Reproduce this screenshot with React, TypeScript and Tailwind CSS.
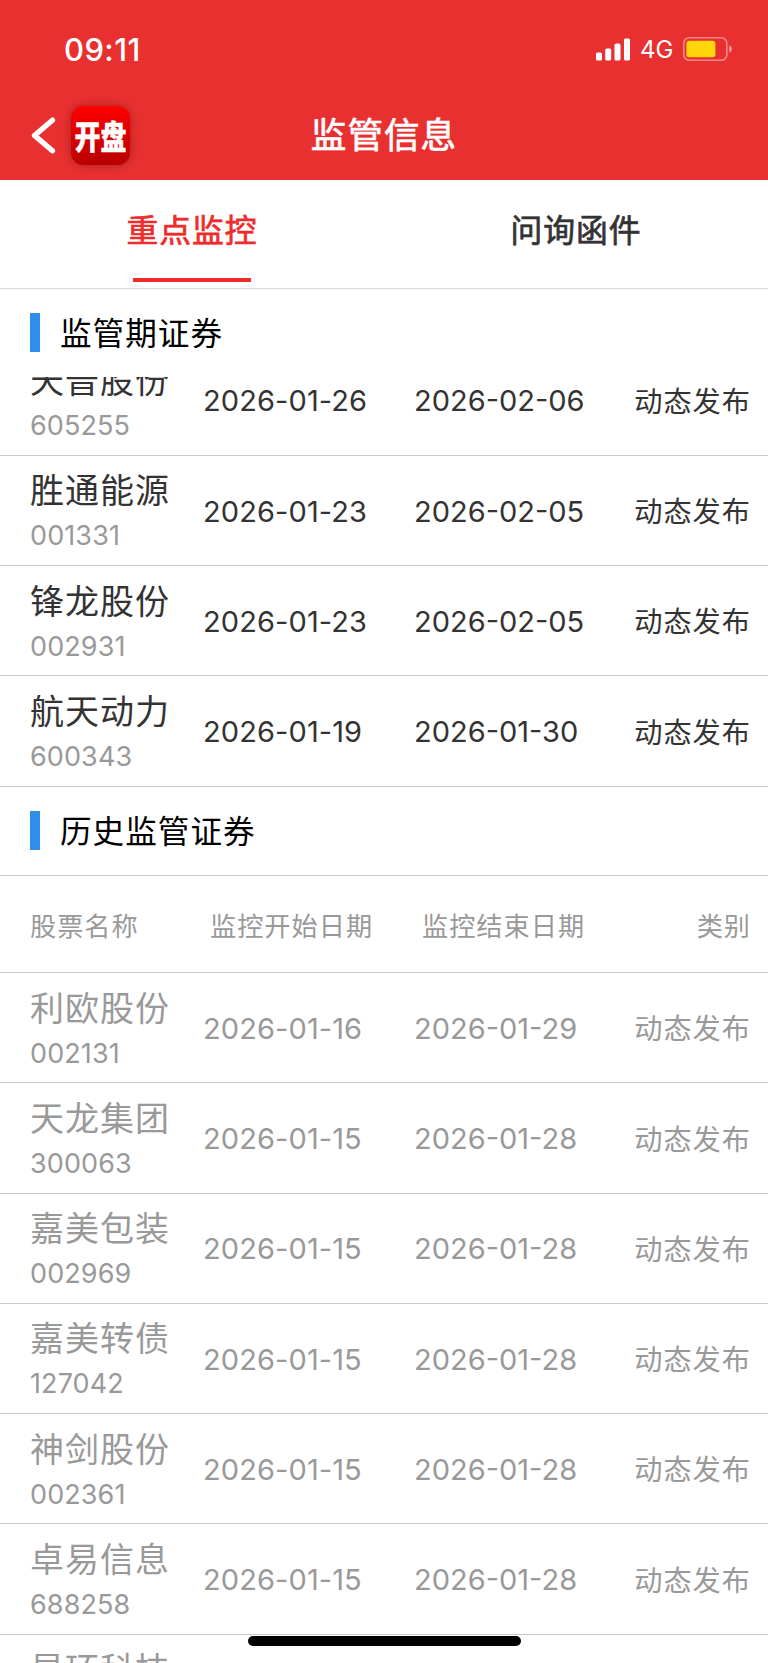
import { useState } from "react";

type Stock = {
  name: string;
  code: string;
  start: string;
  end: string;
  type: string;
};

const activeStocks: Stock[] = [
  { name: "天普股份", code: "605255", start: "2026-01-26", end: "2026-02-06", type: "动态发布" },
  { name: "胜通能源", code: "001331", start: "2026-01-23", end: "2026-02-05", type: "动态发布" },
  { name: "锋龙股份", code: "002931", start: "2026-01-23", end: "2026-02-05", type: "动态发布" },
  { name: "航天动力", code: "600343", start: "2026-01-19", end: "2026-01-30", type: "动态发布" },
];

const historyStocks: Stock[] = [
  { name: "利欧股份", code: "002131", start: "2026-01-16", end: "2026-01-29", type: "动态发布" },
  { name: "天龙集团", code: "300063", start: "2026-01-15", end: "2026-01-28", type: "动态发布" },
  { name: "嘉美包装", code: "002969", start: "2026-01-15", end: "2026-01-28", type: "动态发布" },
  { name: "嘉美转债", code: "127042", start: "2026-01-15", end: "2026-01-28", type: "动态发布" },
  { name: "神剑股份", code: "002361", start: "2026-01-15", end: "2026-01-28", type: "动态发布" },
  { name: "卓易信息", code: "688258", start: "2026-01-15", end: "2026-01-28", type: "动态发布" },
  { name: "星环科技", code: "", start: "", end: "", type: "" },
];

const tabs = ["重点监控", "问询函件"];

function StatusBar() {
  return (
    <div className="flex h-[98px] items-center justify-between pl-[64px] pr-[35px] text-white">
      <span className="text-[31px] font-medium leading-none tracking-[0.4px]">09:11</span>
      <div className="flex items-center">
        <svg width="34" height="23" viewBox="0 0 34 23" fill="currentColor">
          <rect x="0" y="14.5" width="6" height="8" rx="1.6" />
          <rect x="9.2" y="10.5" width="6" height="12" rx="1.6" />
          <rect x="18.5" y="5.5" width="6" height="17" rx="1.6" />
          <rect x="28" y="0.5" width="6" height="22" rx="1.6" />
        </svg>
        <span className="ml-[10px] w-[34px] pt-[2px] text-[24px] leading-none">4G</span>
        <svg className="ml-[9px]" width="50" height="24" viewBox="0 0 50 24">
          <rect x="0.8" y="0.8" width="43" height="22.4" rx="5.5" fill="none" stroke="#fff" strokeOpacity="0.42" strokeWidth="1.6" />
          <rect x="3.4" y="3.8" width="29" height="16.4" rx="3" fill="#ffd60a" />
          <path d="M46.2 8.2c1.7.8 2.6 2.1 2.6 3.8s-.9 3-2.6 3.8z" fill="#fff" fillOpacity="0.5" />
        </svg>
      </div>
    </div>
  );
}

function NavBar() {
  return (
    <div className="grid h-[81.5px] grid-cols-[200px_1fr_200px] items-center pb-[6px] text-white">
      <div className="flex items-center pl-[31px]">
        <svg width="26" height="37" viewBox="0 0 26 37" fill="none" stroke="currentColor" strokeWidth="5.4" strokeLinecap="round" strokeLinejoin="round">
          <path d="M21.4 3.2 3.5 18.5l17.9 15.3" />
        </svg>
        <div className="ml-[14px] flex size-[59px] items-center justify-center rounded-[12px] bg-linear-to-b from-[#ff0000] to-[#b80000] shadow-[0_0_10px_rgba(0,0,0,0.3)]">
          <span className="scale-y-[1.28] pt-[2px] text-[26px] font-black leading-none [-webkit-text-stroke:0.3px_white]">开盘</span>
        </div>
      </div>
      <h1 className="text-center text-[35.6px] leading-none tracking-[1px] [-webkit-text-stroke:0.7px_currentColor]">监管信息</h1>
    </div>
  );
}

function SectionTitle({ title }: { title: string }) {
  return (
    <div className="flex h-[88px] shrink-0 items-center pl-[30px] text-black">
      <span className="h-[39px] w-[10px] bg-[#2f8eea]" />
      <h2 className="ml-[20px] pt-[3px] text-[31.6px] leading-none tracking-[1px]">{title}</h2>
    </div>
  );
}

function StockRow({ stock, muted = false }: { stock: Stock; muted?: boolean }) {
  return (
    <div className={`flex h-[110.25px] w-full shrink-0 items-center border-b border-[#c8c8c8] pl-[30px] pr-[17px] pt-[2px] ${muted ? "text-[#999]" : "text-[#333]"}`}>
      <div className="w-[173px] pt-[5px]">
        <div className="text-[34px] leading-[44px] tracking-[1px]">{stock.name}</div>
        <div className="h-[45px] text-[27px] leading-[46px] tracking-[0.1px] text-[#999]">{stock.code}</div>
      </div>
      <div className="w-[211px] text-[29px] tracking-[0.1px]">{stock.start}</div>
      <div className="text-[29px]">{stock.end}</div>
      <div className="ml-auto pt-[2px] text-[28.2px] tracking-[1px]">{stock.type}</div>
    </div>
  );
}

export default function App() {
  const [tab, setTab] = useState(0);

  return (
    <div className="relative flex h-[1663px] w-[768px] flex-col overflow-hidden bg-white font-['Inter','Noto_Sans_CJK_SC',sans-serif]">
      <header className="shrink-0 bg-[#e93030]">
        <StatusBar />
        <NavBar />
      </header>

      <nav className="flex h-[109px] shrink-0 border-b border-[#d8d8d8]">
        {tabs.map((label, i) => (
          <button
            key={label}
            className={`flex flex-1 flex-col items-center justify-between pb-[6px] pt-[35px] text-[31.8px] leading-none tracking-[1px] [-webkit-text-stroke:0.7px_currentColor] ${tab === i ? "text-[#ee2c2c]" : "text-[#333]"}`}
            onClick={() => setTab(i)}
          >
            {label}
            <span className={`h-1 w-[118px] ${tab === i ? "bg-[#ee2c2c]" : "bg-transparent"}`} />
          </button>
        ))}
      </nav>

      <SectionTitle title="监管期证券" />
      <div className="flex h-[410px] shrink-0 flex-col justify-end overflow-hidden">
        {activeStocks.map((stock) => (
          <StockRow key={stock.code} stock={stock} />
        ))}
      </div>

      <SectionTitle title="历史监管证券" />
      <div className="flex h-[98.5px] shrink-0 items-center border-y border-[#c8c8c8] pl-[30px] pr-[17px] pt-[5px] text-[26.2px] tracking-[1px] text-[#999]">
        <span className="w-[180px]">股票名称</span>
        <span className="w-[212px]">监控开始日期</span>
        <span>监控结束日期</span>
        <span className="ml-auto">类别</span>
      </div>
      <div>
        {historyStocks.map((stock) => (
          <StockRow key={stock.name} stock={stock} muted />
        ))}
      </div>

      <div className="absolute bottom-[17px] left-[248px] h-[10px] w-[273px] rounded-full bg-black" />
    </div>
  );
}
